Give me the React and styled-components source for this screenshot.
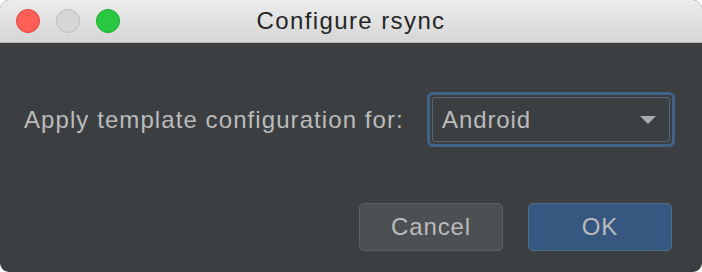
import styled, { createGlobalStyle } from 'styled-components';

const Global = createGlobalStyle`
  html, body {
    margin: 0;
    padding: 0;
    background: #ffffff;
  }
  body {
    font-family: "Liberation Sans", Arial, sans-serif;
  }
`;

const Window = styled.div`
  width: 702px;
  height: 272px;
  border-radius: 9px;
  overflow: hidden;
  display: flex;
  flex-direction: column;
  background: #3c3f41;
`;

const TitleBar = styled.div`
  height: 43px;
  flex-shrink: 0;
  display: flex;
  align-items: center;
  padding-left: 16px;
  position: relative;
  background: linear-gradient(#ececec, #d6d6d6);
  border-bottom: 1px solid #b4b4b4;
  box-sizing: border-box;
`;

const Lights = styled.div`
  display: flex;
  gap: 16px;
`;

const Light = styled.span`
  width: 24px;
  height: 24px;
  border-radius: 50%;
  box-sizing: border-box;
  background: ${(p) => p.$bg};
  border: 1px solid ${(p) => p.$border};
`;

const Title = styled.div`
  position: absolute;
  left: 0;
  right: 0;
  top: 0;
  bottom: 0;
  display: flex;
  align-items: center;
  justify-content: center;
  font-size: 24px;
  letter-spacing: 1.4px;
  color: #262626;
  pointer-events: none;
`;

const Body = styled.div`
  flex: 1;
  display: flex;
  flex-direction: column;
  padding: 49px 27px 21px 24px;
`;

const Row = styled.div`
  display: flex;
  align-items: center;
  justify-content: space-between;
`;

const Label = styled.span`
  font-size: 24px;
  letter-spacing: 1.08px;
  color: #bbbbbb;
`;

const Select = styled.div`
  width: 248px;
  height: 55px;
  box-sizing: border-box;
  border: 3px solid #3f6389;
  border-radius: 6px;
  padding: 2px;
`;

const SelectInner = styled.div`
  height: 100%;
  box-sizing: border-box;
  border: 1px solid #54667a;
  border-radius: 3px;
  display: flex;
  align-items: center;
  justify-content: space-between;
  padding: 0 13px 0 9px;
  font-size: 24px;
  letter-spacing: 0.9px;
  color: #bbbbbb;
`;

const Arrow = styled.span`
  width: 0;
  height: 0;
  border-left: 8px solid transparent;
  border-right: 8px solid transparent;
  border-top: 8px solid #a9abad;
`;

const Buttons = styled.div`
  margin-top: auto;
  display: flex;
  justify-content: flex-end;
  gap: 25px;
  padding-right: 3px;
`;

const Button = styled.button`
  width: 144px;
  height: 48px;
  box-sizing: border-box;
  border-radius: 5px;
  font-family: inherit;
  font-size: 24px;
  letter-spacing: 0.9px;
  color: #bbbbbb;
  background: ${(p) => (p.$primary ? '#365880' : '#4c5052')};
  border: 1px solid ${(p) => (p.$primary ? '#4c708c' : '#5e6060')};
`;

export default function App() {
  return (
    <Window>
      <Global />
      <TitleBar>
        <Lights>
          <Light $bg="#fe5f57" $border="#e0443e" />
          <Light $bg="#d6d6d6" $border="#bcbcbc" />
          <Light $bg="#29c840" $border="#1aab29" />
        </Lights>
        <Title>Configure rsync</Title>
      </TitleBar>
      <Body>
        <Row>
          <Label>Apply template configuration for:</Label>
          <Select>
            <SelectInner>
              <span>Android</span>
              <Arrow />
            </SelectInner>
          </Select>
        </Row>
        <Buttons>
          <Button>Cancel</Button>
          <Button $primary>OK</Button>
        </Buttons>
      </Body>
    </Window>
  );
}
